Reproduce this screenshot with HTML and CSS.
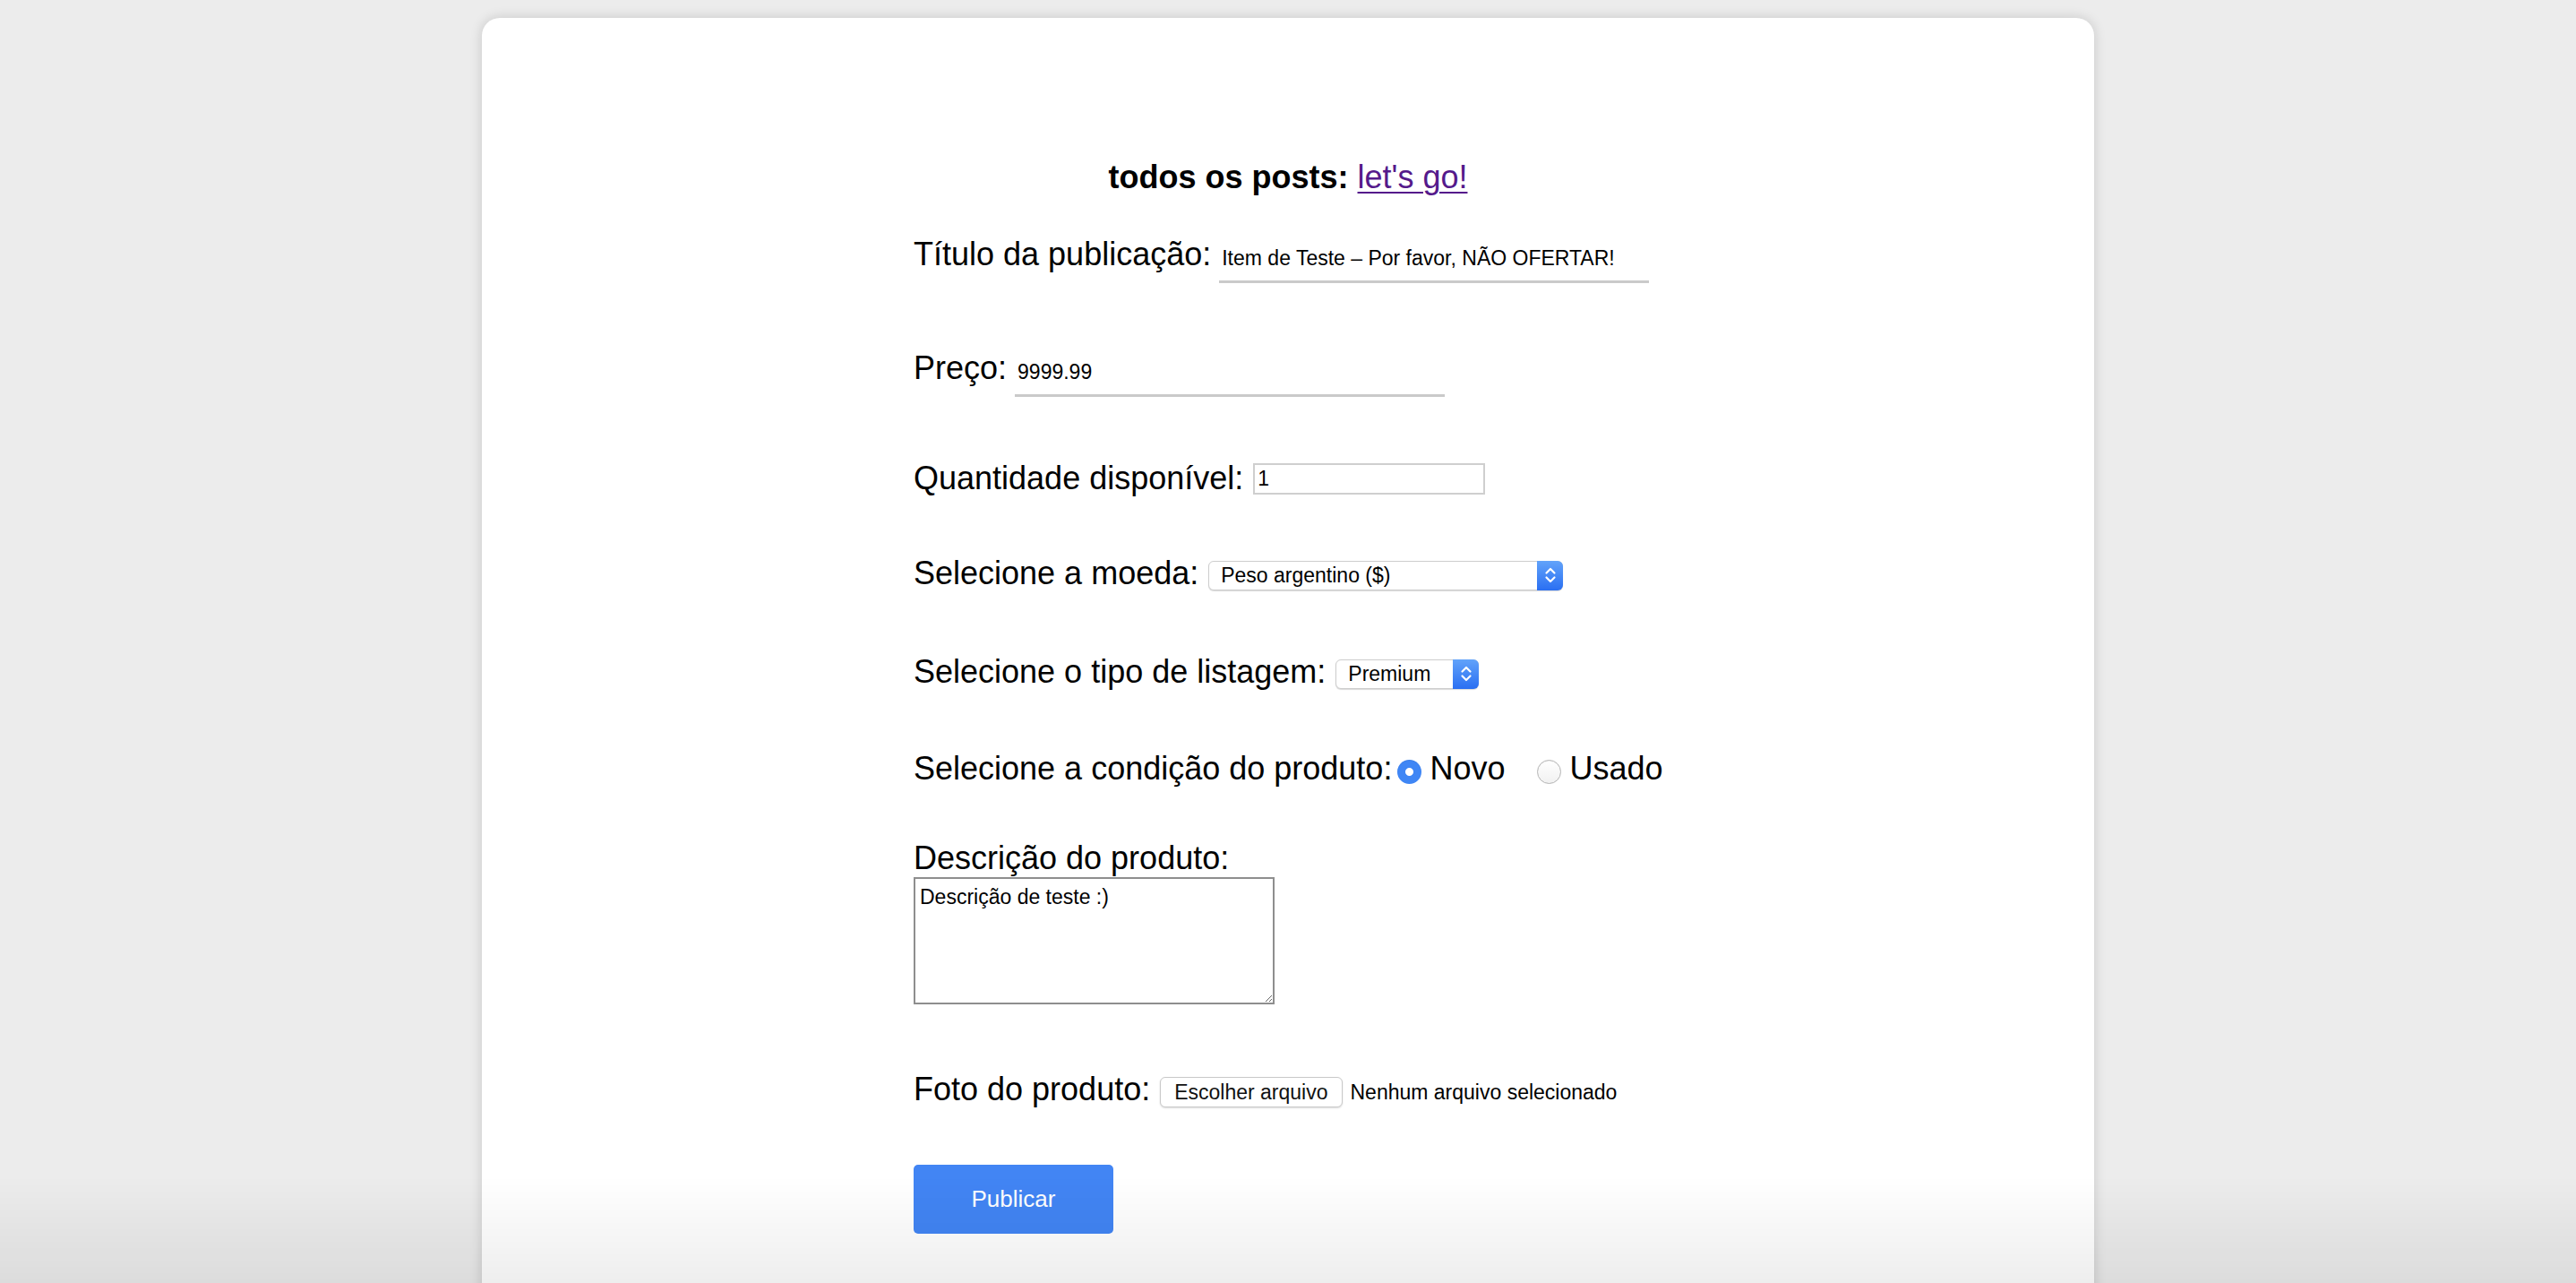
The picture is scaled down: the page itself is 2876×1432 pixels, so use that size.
FILE: index.html
```html
<!DOCTYPE html>
<html lang="pt-BR">
<head>
  <meta charset="UTF-8" />
  <meta name="viewport" content="width=device-width, initial-scale=1" />
  <title>Nova publicação</title>
  <link rel="stylesheet" href="styles.css">
</head>
<body>
  <div class="card">
    <h3 class="title">todos os posts: <a href="#" class="posts-link">let's go!</a></h3>

    <form class="post-form" onsubmit="return false">
      <div class="field field-line">
        <label for="titulo">Título da publicação:</label>
        <input class="line-input" id="titulo" type="text" value="Item de Teste – Por favor, NÃO OFERTAR!">
      </div>

      <div class="field field-line">
        <label for="preco">Preço:</label>
        <input class="line-input" id="preco" type="text" value="9999.99">
      </div>

      <div class="field">
        <label for="qtd">Quantidade disponível:</label>
        <input class="box-input" id="qtd" type="text" value="1">
      </div>

      <div class="field field-moeda">
        <label for="moeda">Selecione a moeda:</label>
        <span class="select-wrap select-wide">
          <select id="moeda">
            <option>Peso argentino ($)</option>
            <option>Real (R$)</option>
            <option>Dólar (US$)</option>
          </select>
          <span class="select-arrows">
            <svg width="14" height="24" viewBox="0 0 14 24"><path d="M2.5 9.5 L7 5 L11.5 9.5 M2.5 14.5 L7 19 L11.5 14.5" fill="none" stroke="#fff" stroke-width="2.2" stroke-linecap="round" stroke-linejoin="round"/></svg>
          </span>
        </span>
      </div>

      <div class="field field-listagem">
        <label for="listagem">Selecione o tipo de listagem:</label>
        <span class="select-wrap select-narrow">
          <select id="listagem">
            <option>Premium</option>
            <option>Clássico</option>
            <option>Grátis</option>
          </select>
          <span class="select-arrows">
            <svg width="14" height="24" viewBox="0 0 14 24"><path d="M2.5 9.5 L7 5 L11.5 9.5 M2.5 14.5 L7 19 L11.5 14.5" fill="none" stroke="#fff" stroke-width="2.2" stroke-linecap="round" stroke-linejoin="round"/></svg>
          </span>
        </span>
      </div>

      <div class="field field-radio">
        <span class="field-label">Selecione a condição do produto:</span>
        <label class="radio-opt">
          <input type="radio" name="condicao" checked> Novo
        </label>
        <label class="radio-opt radio-second">
          <input type="radio" name="condicao"> Usado
        </label>
      </div>

      <div class="field-block">
        <label class="block-label" for="descricao">Descrição do produto:</label>
        <textarea id="descricao">Descrição de teste :)</textarea>
      </div>

      <div class="field">
        <span class="field-label">Foto do produto:</span>
        <label class="file-btn">Escolher arquivo<input type="file" class="file-hidden"></label>
        <span class="file-name">Nenhum arquivo selecionado</span>
      </div>

      <button class="publish" type="submit">Publicar</button>
    </form>
  </div>
  <div class="bottom-fade"></div>
</body>
</html>
```

FILE: styles.css
```css
* {
  box-sizing: border-box;
}
html,
body {
  height: 100%;
}
body {
  margin: 0;
  background: #ececec;
  font-family: "Liberation Sans", Arial, Helvetica, sans-serif;
  color: #000;
  overflow: hidden;
}

.card {
  width: 1800px;
  min-height: 1600px;
  margin: 20px auto 0;
  background: #fff;
  border-radius: 20px;
  box-shadow: 0 0 14px rgba(0, 0, 0, 0.16);
  padding-top: 156px;
}

.title {
  margin: 0 0 42px;
  font-size: 36px;
  line-height: 44px;
  font-weight: 700;
  text-align: center;
}
.posts-link {
  font-weight: 400;
  color: #551a8b;
  text-decoration-thickness: 2px;
  text-underline-offset: 4px;
}

.post-form {
  padding-left: 482px;
}

.field {
  display: flex;
  align-items: center;
  gap: 11px;
  height: 44px;
  margin-bottom: 62px;
  font-size: 36px;
  line-height: 44px;
}
.field-line {
  align-items: baseline;
  gap: 9px;
  margin-bottom: 83px;
}
.field-line + .field-line {
  margin-bottom: 79px;
}
.field-moeda {
  margin-bottom: 66px;
}
.field-listagem {
  margin-bottom: 64px;
}

.line-input {
  width: 480px;
  border: none;
  border-bottom: 3px solid #cacaca;
  padding: 0 3px 10px;
  font-family: "Liberation Sans", Arial, sans-serif;
  font-size: 23px;
  line-height: 30px;
  color: #000;
  outline: none;
  background: transparent;
}

.box-input {
  width: 259px;
  height: 35px;
  border: 2px solid #cfcfcf;
  padding: 0 3px;
  font-family: "Liberation Sans", Arial, sans-serif;
  font-size: 23px;
  color: #000;
  outline: none;
}

.select-wrap {
  position: relative;
  display: flex;
  height: 33px;
  margin-top: 4px;
}
.select-wide {
  width: 396px;
}
.select-narrow {
  width: 160px;
}
.select-wrap select {
  appearance: none;
  -webkit-appearance: none;
  display: block;
  width: 100%;
  height: 33px;
  margin: 0;
  border: 1px solid #cdcdcd;
  border-radius: 6px;
  background: #fff;
  box-shadow: 0 1px 1px rgba(0, 0, 0, 0.15);
  padding: 0 34px 0 13px;
  font-family: "Liberation Sans", Arial, sans-serif;
  font-size: 23px;
  color: #000;
  outline: none;
}
.select-arrows {
  position: absolute;
  top: 0;
  right: 0;
  width: 29px;
  height: 33px;
  border-radius: 0 6px 6px 0;
  background: linear-gradient(#62a3fa, #2a6ff2);
  display: flex;
  align-items: center;
  justify-content: center;
  pointer-events: none;
}

.field-radio {
  gap: 6px;
  margin-bottom: 57px;
}
.radio-opt {
  display: flex;
  align-items: center;
  gap: 9px;
}
.radio-second {
  margin-left: 30px;
}
.radio-opt input {
  appearance: none;
  -webkit-appearance: none;
  margin: 6px 0 0;
  width: 27px;
  height: 27px;
  border-radius: 50%;
  border: 1px solid #b4b4b4;
  background: linear-gradient(#fff, #f1f1f1);
  box-shadow: inset 0 1px 1px rgba(0, 0, 0, 0.05);
}
.radio-opt input:checked {
  border: none;
  background: radial-gradient(circle, #fff 0 4px, #3f86f5 5px);
}

.field-block {
  margin-bottom: 73px;
}
.block-label {
  display: block;
  font-size: 36px;
  line-height: 42px;
}
textarea {
  display: block;
  width: 403px;
  height: 142px;
  border: 2px solid #8e8e8e;
  padding: 6px 5px;
  font-family: "Liberation Sans", Arial, sans-serif;
  font-size: 23px;
  line-height: 28px;
  color: #000;
  outline: none;
}

.file-btn {
  height: 34px;
  margin-top: 6px;
  padding: 0 15px;
  border: 1px solid #c9c9c9;
  border-radius: 6px;
  background: #fff;
  box-shadow: 0 1px 2px rgba(0, 0, 0, 0.14);
  font-size: 23px;
  line-height: 32px;
  color: #111;
  cursor: pointer;
}
.file-hidden {
  display: none;
}
.file-name {
  margin-top: 6px;
  margin-left: -2px;
  font-size: 23px;
  color: #000;
}

.publish {
  display: block;
  width: 223px;
  height: 77px;
  border: none;
  border-radius: 5px;
  background: #4285f4;
  color: #fff;
  font-family: "Liberation Sans", Arial, sans-serif;
  font-size: 26px;
  cursor: pointer;
}

.bottom-fade {
  position: fixed;
  left: 0;
  right: 0;
  bottom: 0;
  height: 120px;
  background: linear-gradient(rgba(0, 0, 0, 0), rgba(0, 0, 0, 0.065));
  pointer-events: none;
}
```
